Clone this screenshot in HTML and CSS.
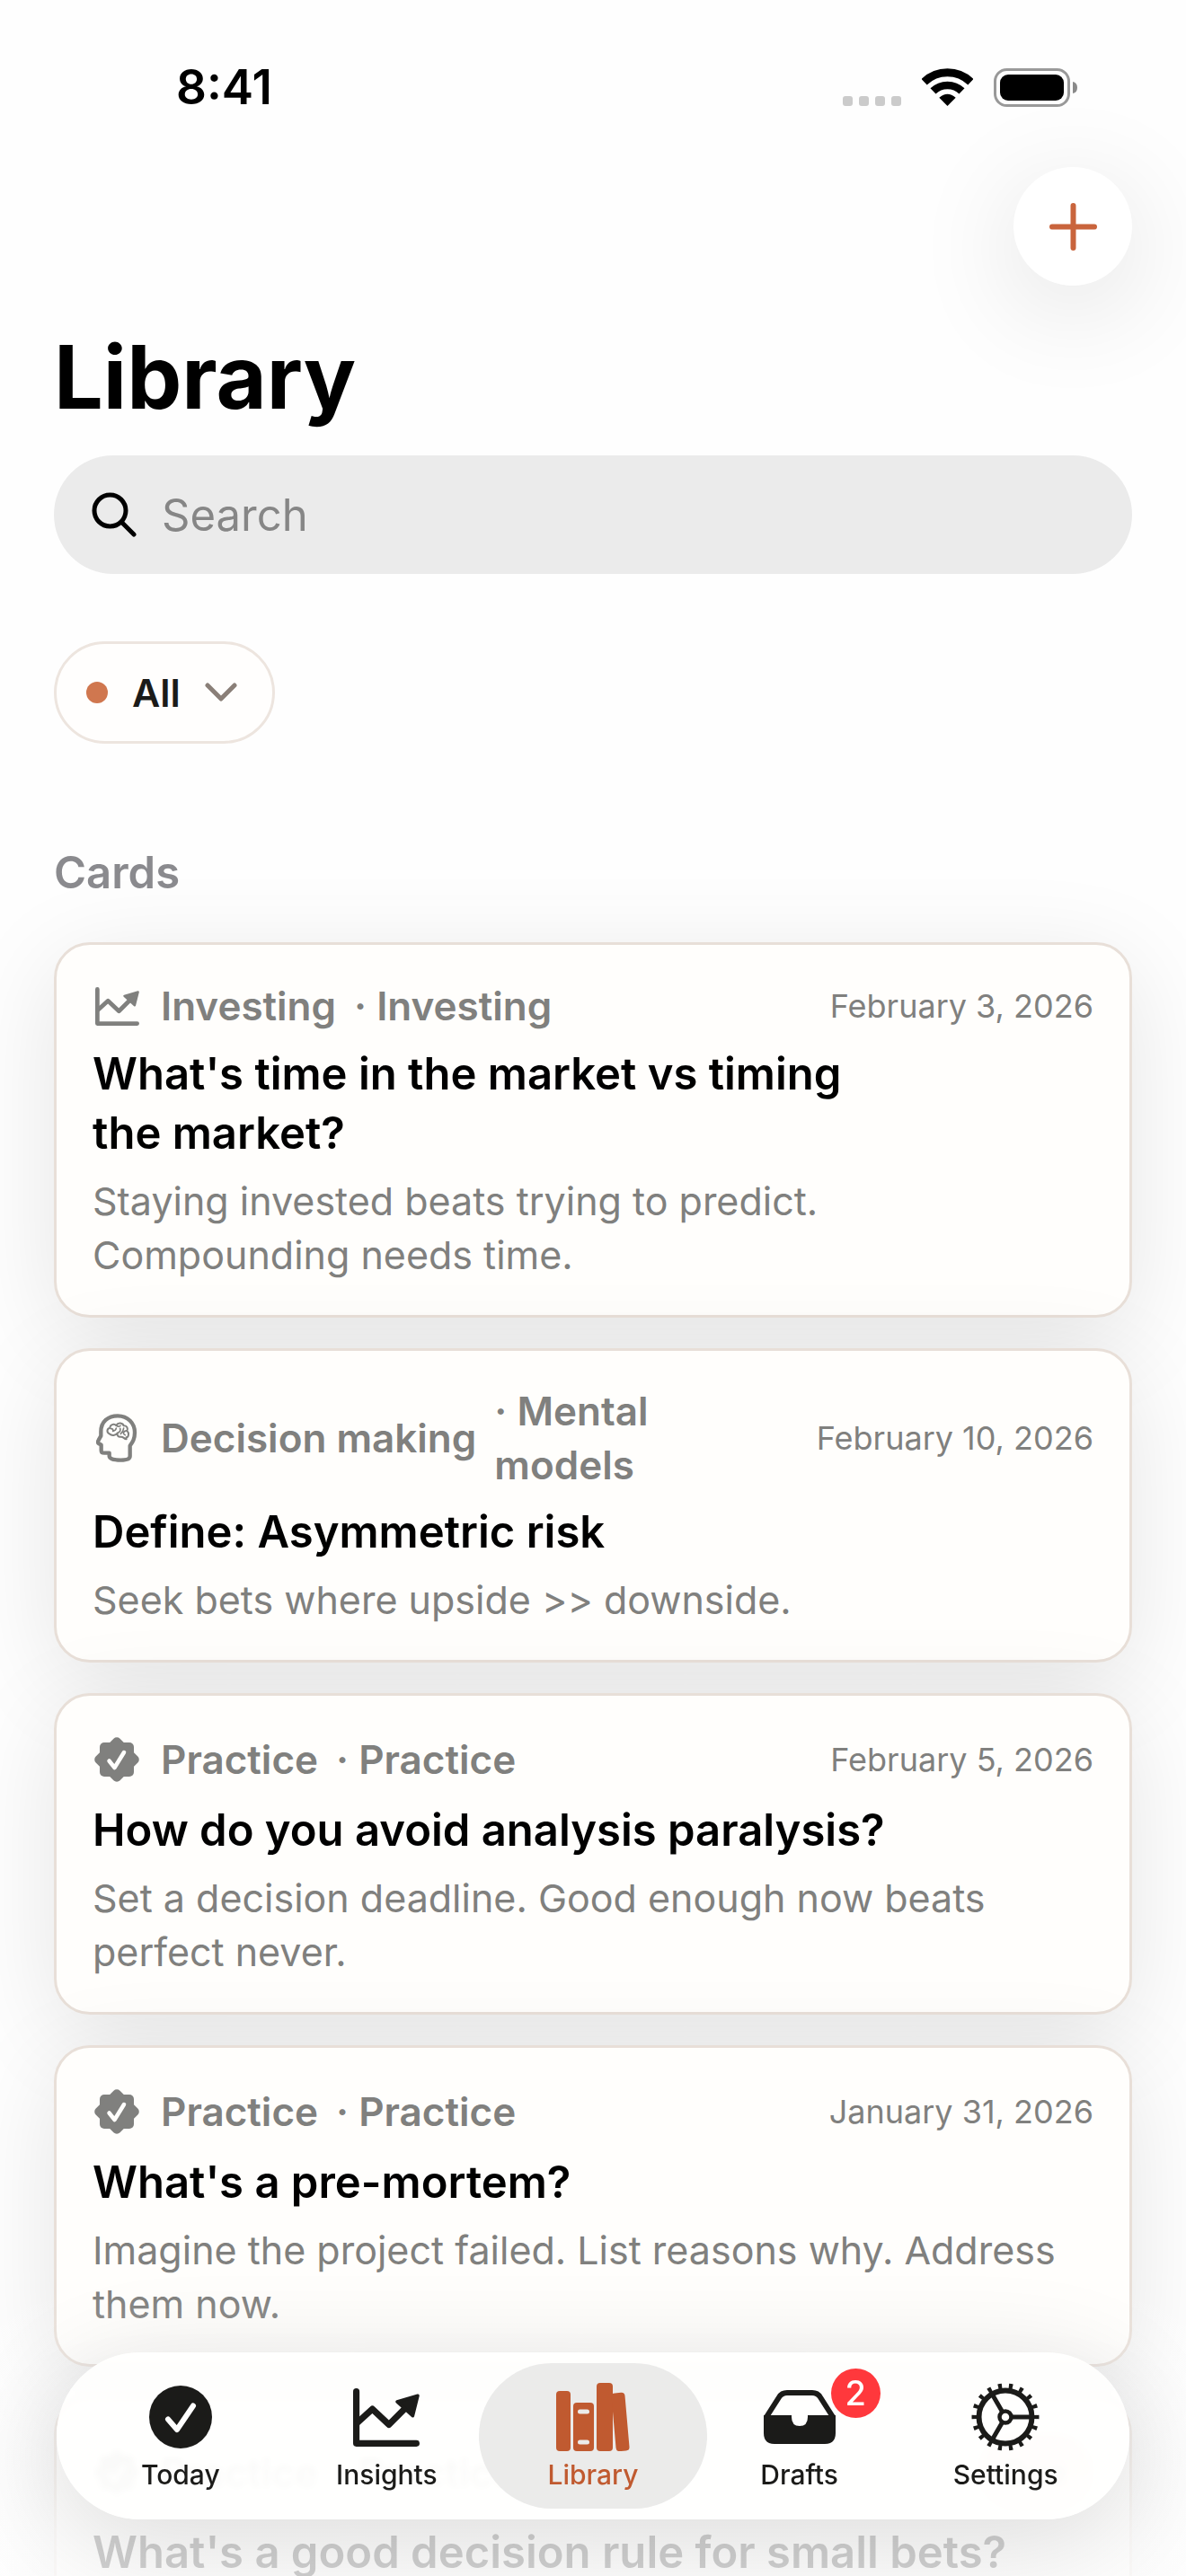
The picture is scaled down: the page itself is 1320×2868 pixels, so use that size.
FILE: index.html
```html
<!DOCTYPE html>
<html lang="en">

<head>
    <meta charset="utf-8">
    <title>Library</title>
    <meta name="viewport" content="width=device-width, initial-scale=1">
    <link rel="stylesheet" href="styles.css">
</head>

<body>

    <!-- Icons used more than once -->
    <svg class="sprite" aria-hidden="true">
        <symbol id="icon-chart" viewBox="0 0 145 127">
            <path d="M7 7V120H138" fill="none" stroke="currentColor" stroke-width="14" stroke-linecap="round" stroke-linejoin="round" />
            <path d="M8 76L42 45L78 79L118 39" fill="none" stroke="currentColor" stroke-width="14" stroke-linejoin="round" />
            <path d="M96 29L141 16L130 60Z" fill="currentColor" stroke="currentColor" stroke-width="7" stroke-linejoin="round" />
        </symbol>
        <symbol id="icon-seal" viewBox="0 0 52 52">
            <rect x="7" y="7" width="38" height="38" rx="5" fill="currentColor" />
            <rect x="7" y="7" width="38" height="38" rx="5" fill="currentColor" transform="rotate(45 26 26)" />
            <path d="M17.500 27.500L23.500 35L34 18" fill="none" stroke="#fffefc" stroke-width="4.500" stroke-linecap="round" stroke-linejoin="round" />
        </symbol>
    </svg>

    <div class="screen">

        <header>
            <div class="status-bar">
                <span class="time">8:41</span>
                <div class="status-icons">
                    <svg width="65" height="43" viewBox="0 0 65 43" fill="#cbcbcb">
                        <rect x="0" y="31" width="11" height="11" rx="3" />
                        <rect x="18" y="31" width="11" height="11" rx="3" />
                        <rect x="36" y="31" width="11" height="11" rx="3" />
                        <rect x="54" y="31" width="11" height="11" rx="3" />
                    </svg>
                    <svg class="wifi" width="57" height="42" viewBox="0 0 171 126">
                        <path d="M7.7 45.5A112 112 0 0 1 163.3 45.5" fill="none" stroke="#000" stroke-width="27" />
                        <path d="M37.5 76.4A69 69 0 0 1 133.5 76.4" fill="none" stroke="#000" stroke-width="26" />
                        <path d="M85.5 126L58 98Q85.5 74 113 98Z" />
                    </svg>
                    <svg width="93" height="43" viewBox="0 0 93 43">
                        <rect x="1.5" y="1.5" width="82" height="40" rx="13" fill="none" stroke="#999" stroke-width="3" />
                        <rect x="7" y="7" width="71" height="29" rx="9" />
                        <path d="M88 15Q93 16 93 21.500T88 28Z" fill="#8a8a8a" />
                    </svg>
                </div>
            </div>
            <div class="toolbar">
                <button type="button" class="add" aria-label="Add card">
                    <svg width="53" height="53" viewBox="0 0 53 53" fill="none" stroke="#c9643c" stroke-width="6" stroke-linecap="round">
                        <path d="M26.500 3V50M3 26.500H50" />
                    </svg>
                </button>
            </div>
            <h1>Library</h1>
        </header>

        <main>
            <form class="search" action="#">
                <label for="search" aria-label="Search">
                    <svg width="50" height="50" viewBox="0 0 50 50" fill="none" stroke="#000" stroke-width="5" stroke-linecap="round">
                        <circle cx="20.500" cy="20.500" r="17.500" />
                        <path d="M33.500 33.500L47 47" />
                    </svg>
                </label>
                <input type="text" name="search" id="search" placeholder="Search">
            </form>

            <button type="button" class="filter">
                <span class="dot"></span>
                All
                <svg width="36" height="22" viewBox="0 0 36 22" fill="none" stroke="#8a7f78" stroke-width="5" stroke-linecap="round" stroke-linejoin="round">
                    <path d="M3 3L18 18L33 3" />
                </svg>
            </button>

            <h2>Cards</h2>

            <article class="card">
                <div class="meta">
                    <span class="icon icon-short"><svg width="49" height="43"><use href="#icon-chart" /></svg></span>
                    <span>Investing</span>
                    <span class="topic">· Investing</span>
                    <time datetime="2026-02-03">February 3, 2026</time>
                </div>
                <h3>What's time in the market vs timing<br>the market?</h3>
                <p>Staying invested beats trying to predict.<br>Compounding needs time.</p>
            </article>

            <article class="card">
                <div class="meta">
                    <span class="icon">
                        <svg width="46" height="54" viewBox="0 0 138 162" fill="none" stroke="currentColor" stroke-linecap="round" stroke-linejoin="round">
                            <path d="M16 60C16 26 40 7 72 7C106 7 129 32 129 63C129 84 122 94 113 107V142C113 152 100 155 82 155C58 155 45 151 44 142V131H27C19 131 17 128 17 122V104L8 99C5 97 6 91 8 88L16 74Z" stroke-width="13" />
                            <path d="M44 67C34 62 36 49 46 48C46 36 60 32 67 39C74 27 89 31 92 40C104 39 107 51 103 57C111 64 109 78 101 79V85C93 84 91 77 84 77C73 79 68 71 72 64C64 73 53 75 44 67Z" stroke-width="6" />
                            <path d="M50 50Q58 50 56 58Q66 56 67 48M67 39Q74 45 81 40M80 49Q83 59 74 63M92 48Q91 59 82 67M103 57Q96 56 91 63Q91 69 97 71" stroke-width="5" />
                        </svg>
                    </span>
                    <span>Decision making</span>
                    <span class="topic">· Mental<br>models</span>
                    <time datetime="2026-02-10">February 10, 2026</time>
                </div>
                <h3>Define: Asymmetric risk</h3>
                <p>Seek bets where upside &gt;&gt; downside.</p>
            </article>

            <article class="card">
                <div class="meta">
                    <span class="icon"><svg width="52" height="52"><use href="#icon-seal" /></svg></span>
                    <span>Practice</span>
                    <span class="topic">· Practice</span>
                    <time datetime="2026-02-05">February 5, 2026</time>
                </div>
                <h3>How do you avoid analysis paralysis?</h3>
                <p>Set a decision deadline. Good enough now beats<br>perfect never.</p>
            </article>

            <article class="card">
                <div class="meta">
                    <span class="icon"><svg width="52" height="52"><use href="#icon-seal" /></svg></span>
                    <span>Practice</span>
                    <span class="topic">· Practice</span>
                    <time datetime="2026-01-31">January 31, 2026</time>
                </div>
                <h3>What's a pre-mortem?</h3>
                <p>Imagine the project failed. List reasons why. Address<br>them now.</p>
            </article>

            <article class="card">
                <div class="meta">
                    <span class="icon"><svg width="52" height="52"><use href="#icon-seal" /></svg></span>
                    <span>Practice</span>
                    <span class="topic">· Practice</span>
                    <span class="due">Due</span>
                </div>
                <h3>What's a good decision rule for small bets?</h3>
            </article>
        </main>

        <!-- Content fades out below the tab bar -->
        <div class="fade"></div>

        <nav class="tab-bar">
            <a href="#today">
                <span class="tab-icon">
                    <svg width="70" height="70" viewBox="0 0 70 70">
                        <circle cx="35" cy="35" r="35" fill="#1b1b19" />
                        <path d="M21 37.500L31 49L49 22.500" fill="none" stroke="#fff" stroke-width="6" stroke-linecap="round" stroke-linejoin="round" />
                    </svg>
                </span>
                Today
            </a>
            <a href="#insights">
                <span class="tab-icon"><svg width="74" height="65"><use href="#icon-chart" /></svg></span>
                Insights
            </a>
            <a href="#library" class="selected" aria-current="page">
                <span class="tab-icon">
                    <svg width="84" height="76" viewBox="0 0 84 76" fill="#c05a30">
                        <rect x="1" y="9" width="16" height="67" rx="4" />
                        <rect x="20" y="22" width="23" height="54" rx="4" />
                        <rect x="46" y="0" width="18" height="76" rx="4" />
                        <rect x="65" y="11" width="15" height="65" rx="4" transform="rotate(-5 72 43)" />
                        <path d="M27.500 32H35.500M27.500 66H35.500" stroke="#ebebea" stroke-width="5" stroke-linecap="round" />
                    </svg>
                </span>
                Library
            </a>
            <a href="#drafts">
                <span class="tab-icon">
                    <svg width="80" height="60" viewBox="0 0 80 60">
                        <path d="M3 30L17 8Q20 3 26 3H54Q60 3 63 8L77 30" fill="none" stroke="#1b1b19" stroke-width="6" />
                        <path d="M0 28H31V30Q31 40 40 40T49 30V28H80V48Q80 60 68 60H12Q0 60 0 48Z" fill="#1b1b19" />
                    </svg>
                    <span class="badge">2</span>
                </span>
                Drafts
            </a>
            <a href="#settings">
                <span class="tab-icon">
                    <svg width="76" height="76" viewBox="0 0 76 76" fill="none" stroke="#1b1b19">
                        <circle cx="38" cy="38" r="34.500" stroke-width="6" pathLength="360" stroke-dasharray="7 13" stroke-dashoffset="3.500" />
                        <circle cx="38" cy="38" r="29.500" stroke-width="6" />
                        <circle cx="38" cy="38" r="6.500" stroke-width="4.500" />
                        <path d="M45 38H67M34.500 32L23.500 13M34.500 44L23.500 63" stroke-width="5" />
                    </svg>
                </span>
                Settings
            </a>
        </nav>

    </div>

</body>

</html>
```
FILE: styles.css
```css
* {
    margin: 0;
    padding: 0;
    box-sizing: border-box;
}

body {
    font-family: Inter, "Liberation Sans", sans-serif;
    background-color: #fefefe;
    color: #000;
}

svg {
    display: block;
    flex: none;
}

button,
input {
    font-family: inherit;
    border: 0;
}

.sprite {
    position: absolute;
    width: 0;
    height: 0;
}

.screen {
    position: relative;
    height: 100vh;
    overflow: hidden;
    padding: 66px 60px 0;
}

/** Status bar **/
.status-bar {
    display: flex;
    align-items: center;
    justify-content: space-between;
    height: 62px;
    padding: 0 61px 0 136px;
}

.time {
    font-size: 53px;
    font-weight: 600;
}

.status-icons {
    display: flex;
    align-items: center;
    gap: 23px;
}

/** Header **/
.toolbar {
    display: flex;
    justify-content: flex-end;
    margin-top: 58px;
}

.add {
    display: flex;
    align-items: center;
    justify-content: center;
    width: 132px;
    height: 132px;
    border-radius: 50%;
    background-color: #fff;
    box-shadow: 0 24px 120px rgba(0, 0, 0, 0.12);
}

h1 {
    margin-top: 41px;
    font-size: 97px;
    line-height: 122px;
    font-weight: 700;
}

/** Search **/
.search {
    display: flex;
    align-items: center;
    gap: 28px;
    height: 132px;
    margin-top: 26px;
    padding: 0 42px;
    border-radius: 66px;
    background-color: #ebebeb;
}

.search input {
    flex: 1;
    min-width: 0;
    height: 100%;
    font-size: 49px;
    color: #000;
    background: none;
    outline: none;
}

.search input::placeholder {
    color: #868686;
    opacity: 1;
}

/** Filter **/
.filter {
    display: flex;
    align-items: center;
    gap: 27px;
    height: 114px;
    margin-top: 75px;
    padding: 0 39px 0 33px;
    border: 3px solid #ede5df;
    border-radius: 57px;
    background-color: #fffefd;
    font-size: 43px;
    font-weight: 600;
    color: #1b1b19;
}

.dot {
    width: 24px;
    height: 24px;
    border-radius: 50%;
    background-color: #d0774f;
}

h2 {
    margin: 114px 0 47px;
    font-size: 49px;
    line-height: 60px;
    font-weight: 600;
    color: #8a8a8e;
}

/** Cards **/
.card {
    margin-bottom: 34px;
    padding: 37px 40px;
    border: 3px solid #e8dfd8;
    border-radius: 40px;
    background-color: #fffefc;
    box-shadow: 0 24px 110px rgba(0, 0, 0, 0.1);
}

.meta {
    display: flex;
    align-items: center;
    font-size: 44px;
    line-height: 60px;
    font-weight: 600;
    color: #80807e;
}

.icon {
    display: flex;
    align-items: center;
    justify-content: center;
    width: 54px;
    height: 68px;
    margin-right: 22px;
}

.icon-short {
    height: 62px;
}

.topic {
    margin-left: 20px;
}

time {
    margin-left: auto;
    font-size: 36px;
    font-weight: 400;
}

h3 {
    margin-top: 12px;
    font-size: 49px;
    line-height: 66px;
    font-weight: 600;
}

.card p {
    margin-top: 12px;
    font-size: 43px;
    line-height: 60px;
    color: #80807e;
}

.due {
    margin-left: auto;
    padding: 14px 30px;
    border-radius: 44px;
    background-color: #ffd5cf;
    font-size: 36px;
}

.fade {
    position: absolute;
    right: 0;
    bottom: 0;
    left: 0;
    height: 320px;
    background: linear-gradient(rgba(254, 254, 254, 0), rgba(254, 254, 254, 0.82) 85%);
}

/** Tab bar **/
.tab-bar {
    position: absolute;
    right: 63px;
    bottom: 63px;
    left: 63px;
    display: grid;
    grid-template-columns: repeat(5, 1fr);
    padding: 12px 23px;
    border-radius: 93px;
    background-color: rgba(255, 255, 254, 0.9);
    backdrop-filter: blur(3px);
    box-shadow: 0 24px 120px rgba(0, 0, 0, 0.14);
}

.tab-bar a {
    display: flex;
    flex-direction: column;
    align-items: center;
    gap: 8px;
    height: 162px;
    padding-top: 22px;
    font-size: 30px;
    line-height: 36px;
    font-weight: 500;
    color: #1b1b19;
    text-decoration: none;
}

.tab-bar .selected {
    margin: 0 -12px;
    border-radius: 81px;
    background-color: #ebebea;
    color: #c05a30;
}

.tab-icon {
    position: relative;
    display: flex;
    align-items: center;
    justify-content: center;
    height: 76px;
}

.badge {
    position: absolute;
    top: -16px;
    right: -50px;
    width: 55px;
    height: 55px;
    border-radius: 50%;
    background-color: #ff383c;
    color: #fff;
    font-size: 38px;
    line-height: 55px;
    font-weight: 500;
    text-align: center;
}
```
